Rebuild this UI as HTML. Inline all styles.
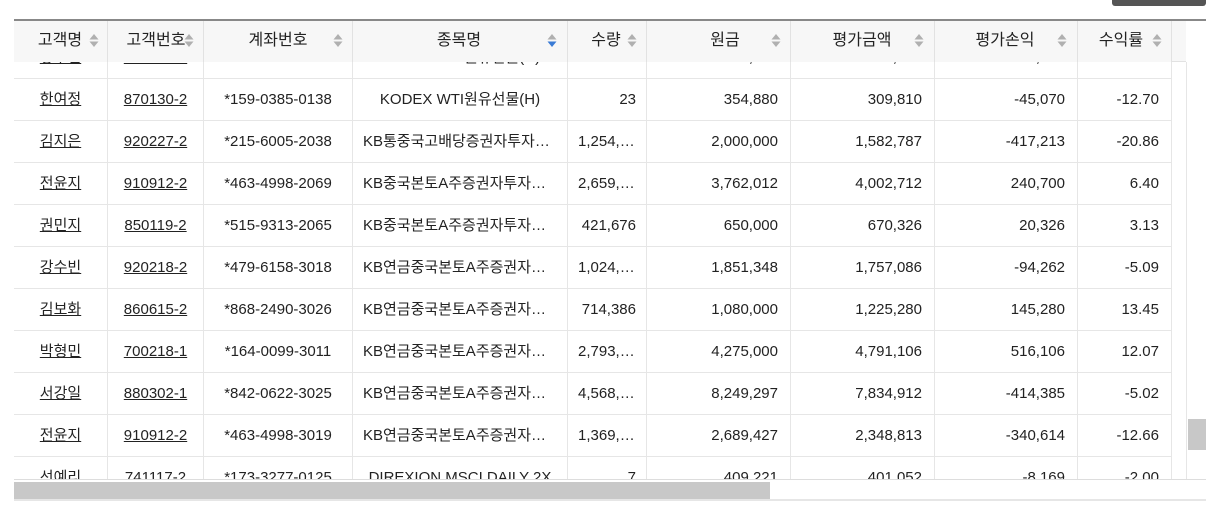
<!DOCTYPE html>
<html><head><meta charset="utf-8"><style>
*{box-sizing:border-box;margin:0;padding:0}
body{width:1224px;height:518px;background:#fff;position:relative;overflow:hidden;font-family:"Liberation Sans","Noto Sans CJK KR",sans-serif;font-size:15px;color:#222}
.btn{position:absolute;left:1112px;top:-4px;width:94px;height:10px;background:#555;border-radius:3px}
.wrap{position:absolute;left:14px;top:19px;width:1192px;height:480px;border-top:2px solid #888}
.body{position:absolute;left:0;top:41px;width:1172px;height:417px;overflow:hidden}
.row{position:absolute;left:0;height:42px;width:1158px;border-bottom:1px solid #e6e6e6}
.c{position:absolute;top:0;height:42px;line-height:42px;border-right:1px solid #e6e6e6;white-space:nowrap;overflow:hidden;text-overflow:ellipsis;padding:0 12px}
.ctr{text-align:center}.r{text-align:right}
.u{text-decoration:underline}
.hd{position:absolute;left:0;top:0;height:41px;width:1172px;background:#f7f7f7;border-bottom:1px solid #e2e2e2;z-index:2;font-size:16px}
.hd .c{height:41px;line-height:40px;background:#f7f7f7;border-right:1px solid #e2e2e2;overflow:visible}
.s{position:absolute;top:12px;width:10px;height:15px}
.vs{position:absolute;left:1172px;top:41px;width:20px;height:417px;background:#fff;border-left:1px solid #e6e6e6}
.vt{position:absolute;left:1174px;top:398px;width:18px;height:31px;background:#c8c8c8}
.hs{position:absolute;left:0;top:458px;width:1192px;height:22px;border-top:1px solid #ddd;border-bottom:2px solid #e6e6e6;background:#fff}
.ht{position:absolute;left:0;top:2px;width:756px;height:17px;background:#c8c8c8}
</style></head><body>
<div class="btn"></div>
<div class="wrap">
<div class="hd" id="hd"></div>
<div class="body" id="bd"></div>
<div class="vs"></div><div class="vt"></div>
<div class="hs"><div class="ht"></div></div>
</div>
<script>
var L=[0,94,190,339,554,633,777,921,1064,1158];
var H=['고객명','고객번호','계좌번호','종목명','수량','원금','평가금액','평가손익','수익률'];
var SX=[80,175,324,538,618,762,905,1048,1143];
var TX=[46,142,264,445,592,711,848,991,1107];
function sort(x,blue){return '<svg class="s" style="left:'+x+'px" viewBox="0 0 10 15"><path d="M5 1L9.5 6.5H0.5Z" fill="#b0b0b0"/><path d="M5 14L9.5 8.5H0.5Z" fill="'+(blue?'#3a7bd5':'#b0b0b0')+'"/></svg>';}
var h='';
for(var i=0;i<9;i++){h+='<div class="c" style="left:'+L[i]+'px;width:'+(L[i+1]-L[i])+'px;padding:0"><span style="position:absolute;left:'+(TX[i]-L[i])+'px;transform:translateX(-50%)">'+H[i]+'</span>'+sort(SX[i]-L[i]-5,i==3)+'</div>';}
document.getElementById('hd').innerHTML=h;
var R=[['강수민','920218-2','*479-0158-0128','KODEX WTI원유선물(H)','33','348,327','444,940','96,983','28.05'],
['한여정','870130-2','*159-0385-0138','KODEX WTI원유선물(H)','23','354,880','309,810','-45,070','-12.70'],
['김지은','920227-2','*215-6005-2038','KB통중국고배당증권자투자신탁','1,254,000','2,000,000','1,582,787','-417,213','-20.86'],
['전윤지','910912-2','*463-4998-2069','KB중국본토A주증권자투자신탁','2,659,000','3,762,012','4,002,712','240,700','6.40'],
['권민지','850119-2','*515-9313-2065','KB중국본토A주증권자투자신탁','421,676','650,000','670,326','20,326','3.13'],
['강수빈','920218-2','*479-6158-3018','KB연금중국본토A주증권자투자','1,024,000','1,851,348','1,757,086','-94,262','-5.09'],
['김보화','860615-2','*868-2490-3026','KB연금중국본토A주증권자투자','714,386','1,080,000','1,225,280','145,280','13.45'],
['박형민','700218-1','*164-0099-3011','KB연금중국본토A주증권자투자','2,793,000','4,275,000','4,791,106','516,106','12.07'],
['서강일','880302-1','*842-0622-3025','KB연금중국본토A주증권자투자','4,568,000','8,249,297','7,834,912','-414,385','-5.02'],
['전윤지','910912-2','*463-4998-3019','KB연금중국본토A주증권자투자','1,369,000','2,689,427','2,348,813','-340,614','-12.66'],
['선예리','741117-2','*173-3277-0125','DIREXION MSCI DAILY 2X','7','409,221','401,052','-8,169','-2.00']];
var b='';
for(var k=0;k<R.length;k++){b+='<div class="row" style="top:'+(-25+k*42)+'px">';
for(var i=0;i<9;i++){var cl=i<4?'ctr':'r';if(i<2)cl+=' u';
b+='<div class="c '+cl+'" style="left:'+L[i]+'px;width:'+(L[i+1]-L[i])+'px'+(i==3?';padding:0 10px':'')+(i==4?';padding:0 10px':'')+'">'+R[k][i]+'</div>';}
b+='</div>';}
document.getElementById('bd').innerHTML=b;
</script>
</body></html>
